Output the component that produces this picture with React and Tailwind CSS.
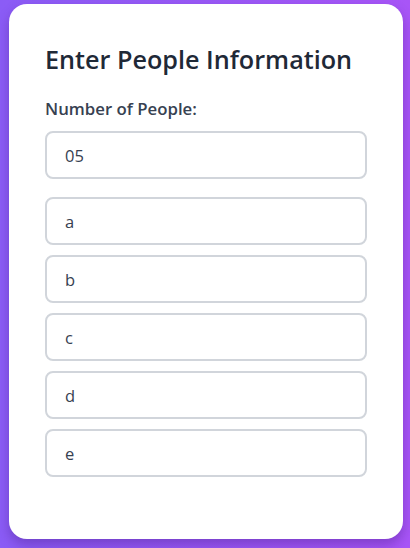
import React from 'react';

const people = ['a', 'b', 'c', 'd', 'e'];

export default function App() {
  return (
    <div
      className="min-h-screen bg-gradient-to-r from-[#8b5cf6] to-[#a855f7] pt-[4px] pl-[9px]"
      style={{ fontFamily: '"Open Sans", "Noto Sans", sans-serif' }}
    >
      <div className="w-[394px] h-[535px] bg-white rounded-[18px] shadow-[0_6px_12px_rgba(60,20,120,0.35)] px-[36px] pt-[38px]">
        <h2 className="text-[25.2px] leading-[34px] font-semibold text-[#1f2937]">
          Enter People Information
        </h2>
        <label className="block mt-[22px] text-[16.8px] leading-[22px] font-semibold text-[#374151]">
          Number of People:
        </label>
        <input
          type="text"
          defaultValue="05"
          className="mt-[11px] block w-[322px] h-[48px] border-2 border-[#d1d5db] rounded-[8px] px-[18px] text-[16.5px] text-[#374151] outline-none"
        />
        <div className="mt-[18px] flex flex-col gap-[10px]">
          {people.map((p) => (
            <input
              key={p}
              type="text"
              defaultValue={p}
              className="block w-[322px] h-[48px] border-2 border-[#d1d5db] rounded-[8px] px-[18px] text-[16.5px] text-[#374151] outline-none"
            />
          ))}
        </div>
      </div>
    </div>
  );
}
